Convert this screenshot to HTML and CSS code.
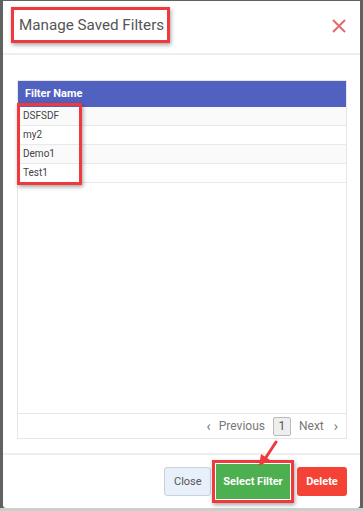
FILE: index.html
```html
<!doctype html>
<html>
<head>
	<meta charset="utf-8">
	<title>Manage Saved Filters</title>
	<link rel="stylesheet" href="styles.css">
</head>
<body>
<div class="modal">
	<div class="modal-header">
		<h4 class="title mark">Manage Saved Filters</h4>
		<svg class="close-x" width="16" height="16" viewBox="0 0 16 16"><path d="M2 2 L14 14 M14 2 L2 14" stroke="#e36b6b" stroke-width="2" fill="none"/></svg>
	</div>

	<div class="modal-body">
		<div class="grid">
			<div class="grid-head">Filter Name</div>
			<div class="grid-rows">
				<div class="row">DSFSDF</div>
				<div class="row">my2</div>
				<div class="row">Demo1</div>
				<div class="row">Test1</div>
				<div class="rows-mark"></div>
			</div>
			<div class="pager">
				<span class="pg-arrow">&lsaquo;</span>
				<span class="pg-link">Previous</span>
				<span class="pg-num">1</span>
				<span class="pg-link">Next</span>
				<span class="pg-arrow pg-next">&rsaquo;</span>
			</div>
		</div>
	</div>

	<div class="modal-footer">
		<button class="btn btn-close">Close</button>
		<span class="mark btn-mark"><button class="btn btn-select">Select Filter</button></span>
		<button class="btn btn-delete">Delete</button>
		<svg class="arrow" width="24" height="28" viewBox="0 0 24 28"><path d="M20 2 L7 22" stroke="#ee3b3b" stroke-width="3" stroke-linecap="round" fill="none"/><path d="M3 26 L5 14 L14 20 Z" fill="#ee3b3b"/></svg>
	</div>
</div>
<div class="backdrop-foot"></div>
</body>
</html>
```

FILE: styles.css
```css
html, body {
	margin: 0;
	padding: 0;
}
body {
	background: #5e6360;
	font-family: Roboto, "Liberation Sans", sans-serif;
	width: 363px;
	height: 511px;
	overflow: hidden;
}
.modal {
	position: relative;
	margin-left: 3px;
	margin-top: 1px;
	width: 357px;
	height: 507px;
	background: #fff;
	border-radius: 0 0 3px 3px;
	display: flex;
	flex-direction: column;
}
.backdrop-foot {
	height: 3px;
	background: #c9d1cc;
}
.mark {
	border: 3px solid #f0393c;
	box-shadow: 1px 2px 4px rgba(0, 0, 0, 0.35);
}
.modal-header {
	height: 46px;
	border-bottom: 2px solid #eeeeee;
	padding: 6px 13px 0 8px;
	display: flex;
	align-items: flex-start;
	justify-content: space-between;
}
.title {
	margin: 0;
	height: 30px;
	line-height: 30px;
	padding: 0 3px 0 5px;
	font-size: 15.2px;
	font-weight: normal;
	color: #555;
}
.close-x {
	margin-top: 11px;
}
.modal-body {
	padding: 25px 13px 14px 14px;
}
.grid {
	border: 1px solid #e6e6e6;
	height: 357px;
	display: flex;
	flex-direction: column;
}
.grid-head {
	background: #5061bf;
	color: #fff;
	font-weight: bold;
	font-size: 11px;
	height: 26px;
	line-height: 26px;
	padding-left: 7px;
}
.grid-rows {
	position: relative;
	flex: 1;
	border-bottom: 1px solid #e6e6e6;
}
.row {
	height: 18px;
	line-height: 18px;
	border-bottom: 1px solid #e9e9e9;
	font-size: 10px;
	color: #444;
	padding-left: 5px;
}
.row:nth-child(odd) {
	background: #fafafa;
}
.rows-mark {
	position: absolute;
	left: -1px;
	top: -4px;
	width: 59px;
	height: 76px;
	border: 3px solid #f0393c;
	box-shadow: 1px 2px 4px rgba(0, 0, 0, 0.35);
}
.pager {
	height: 24px;
	display: flex;
	align-items: center;
	justify-content: flex-end;
	gap: 8px;
	padding-right: 8px;
	font-size: 12px;
	color: #777;
}
.pg-arrow {
	font-size: 14px;
}
.pg-next {
	margin-left: 2px;
}
.pg-num {
	display: inline-block;
	width: 16px;
	height: 17px;
	line-height: 17px;
	text-align: center;
	background: #eee;
	border: 1px solid #bbb;
	border-radius: 2px;
	color: #555;
}
.modal-footer {
	position: relative;
	border-top: 2px solid #eeeeee;
	flex: 1;
	display: flex;
	align-items: center;
	justify-content: flex-end;
	padding-right: 13px;
}
.btn {
	font-family: Roboto, "Liberation Sans", sans-serif;
	font-size: 11px;
	height: 29px;
	border-radius: 3px;
	border: 1px solid transparent;
	padding: 0 9px;
	cursor: pointer;
}
.btn-close {
	background: #e8f1fb;
	border-color: #c9d2db;
	color: #555;
	width: 47px;
	margin-right: 1px;
}
.btn-mark {
	display: inline-block;
	padding: 1px;
	margin-right: 3px;
	line-height: 0;
}
.btn-select {
	background: #4caf50;
	color: #fff;
	font-weight: bold;
	width: 74px;
	height: 35px;
	border-radius: 0;
	padding: 0;
}
.btn-delete {
	background: #f44336;
	color: #fff;
	font-weight: bold;
	width: 50px;
	padding: 0;
}
.arrow {
	position: absolute;
	left: 253px;
	top: -15px;
}
```
